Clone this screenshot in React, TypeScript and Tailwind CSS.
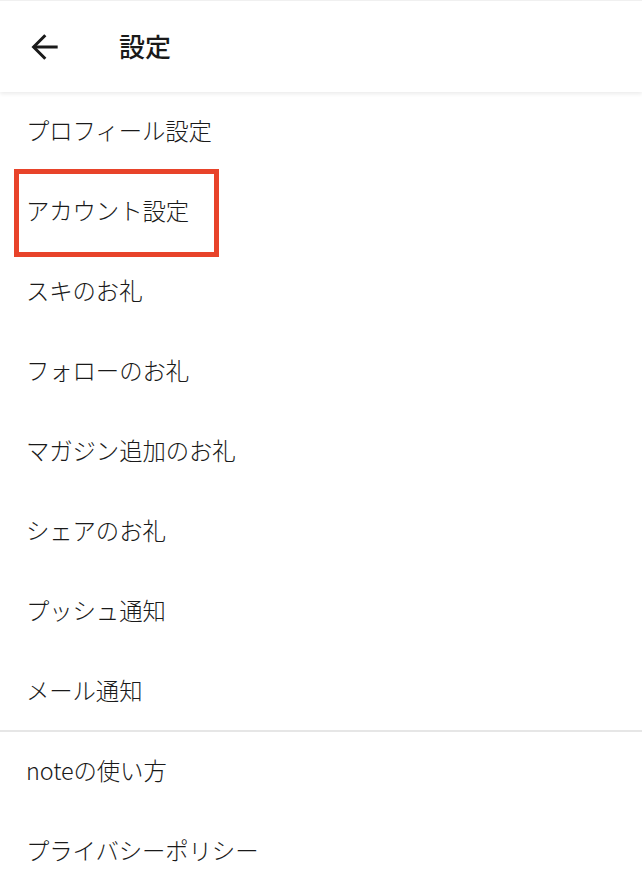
const mainItems = [
  'プロフィール設定',
  'アカウント設定',
  'スキのお礼',
  'フォローのお礼',
  'マガジン追加のお礼',
  'シェアのお礼',
  'プッシュ通知',
  'メール通知',
];

const subItems = ['noteの使い方', 'プライバシーポリシー'];

function Row({ label, highlighted }: { label: string; highlighted?: boolean }) {
  return (
    <div className="relative h-[80px] flex items-center pl-[26px] pb-[2px]">
      {highlighted && (
        <div className="absolute left-[14px] top-[-3px] w-[205px] h-[88px] border-[5px] border-[#e8432a]" />
      )}
      <span className="text-[23.4px] font-light text-[#1a1a1a] tracking-[-0.1px]">{label}</span>
    </div>
  );
}

export default function App() {
  return (
    <div
      className="w-[642px] h-[886px] bg-white overflow-hidden"
      style={{ fontFamily: '"Noto Sans CJK JP", "Noto Sans", sans-serif' }}
    >
      {/* Header */}
      <header className="relative z-10 h-[92px] flex items-center bg-white border-t border-[#f0f0f0] shadow-[0_2px_4px_rgba(0,0,0,0.08)]">
        <button className="ml-[26px] w-[38px] h-[38px] flex items-center justify-center">
          <svg width="38" height="38" viewBox="0 0 24 24" fill="none" stroke="#1a1a1a" strokeWidth="1.9">
            <path d="M20 12H4.8" />
            <path d="M12.2 4.6L4.8 12l7.4 7.4" />
          </svg>
        </button>
        <h1 className="ml-[55px] mb-[3px] text-[26px] font-medium text-[#1a1a1a]">設定</h1>
      </header>

      {/* Settings */}
      <nav>
        {mainItems.map((item) => (
          <Row key={item} label={item} highlighted={item === 'アカウント設定'} />
        ))}
      </nav>
      <div className="h-[2px] bg-[#e6e6e6] -mt-[2px]" />
      <nav>
        {subItems.map((item) => (
          <Row key={item} label={item} />
        ))}
      </nav>
    </div>
  );
}
